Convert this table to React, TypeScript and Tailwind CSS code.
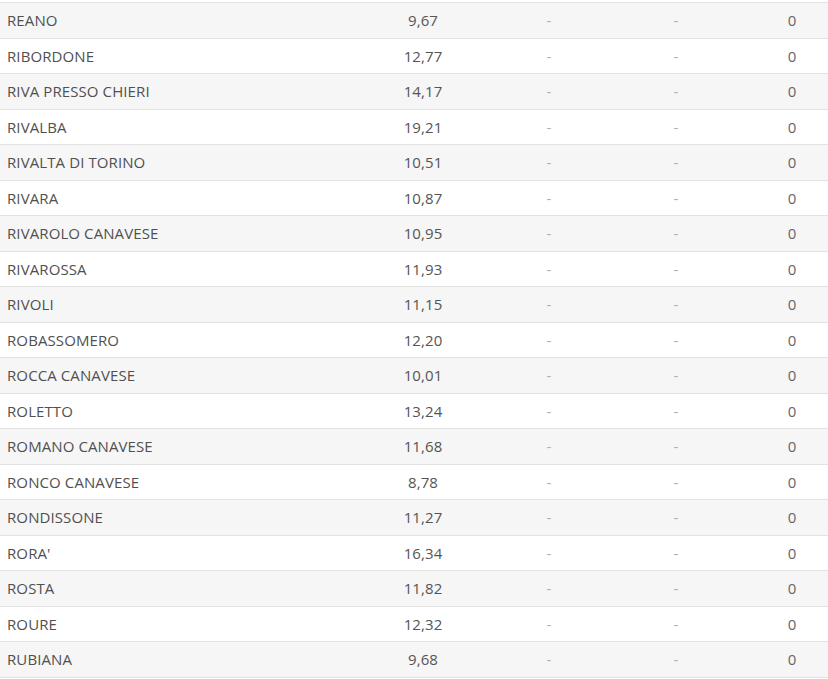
import React from "react";

const rows: [string, string][] = [
  ["REANO", "9,67"],
  ["RIBORDONE", "12,77"],
  ["RIVA PRESSO CHIERI", "14,17"],
  ["RIVALBA", "19,21"],
  ["RIVALTA DI TORINO", "10,51"],
  ["RIVARA", "10,87"],
  ["RIVAROLO CANAVESE", "10,95"],
  ["RIVAROSSA", "11,93"],
  ["RIVOLI", "11,15"],
  ["ROBASSOMERO", "12,20"],
  ["ROCCA CANAVESE", "10,01"],
  ["ROLETTO", "13,24"],
  ["ROMANO CANAVESE", "11,68"],
  ["RONCO CANAVESE", "8,78"],
  ["RONDISSONE", "11,27"],
  ["RORA'", "16,34"],
  ["ROSTA", "11,82"],
  ["ROURE", "12,32"],
  ["RUBIANA", "9,68"],
];

export default function App() {
  return (
    <div
      className="w-[828px] h-[679px] bg-white overflow-hidden pt-[2px]"
      style={{ fontFamily: '"Open Sans", "Noto Sans", sans-serif' }}
    >
      <div className="border-t border-[#e2e2e2]">
        {rows.map(([name, val], i) => (
          <div
            key={name}
            className={`grid grid-cols-[360px_126px_126px_128px_1fr] items-center h-[35.5px] border-b border-[#e2e2e2] text-[15px] tracking-[0.1px] ${
              i % 2 === 0 ? "bg-[#f6f6f6]" : "bg-white"
            }`}
          >
            <div className="pl-[7px] text-[#505050]">{name}</div>
            <div className="text-center text-[#555555]">{val}</div>
            <div className="text-center text-[#b0b0b0]">-</div>
            <div className="text-center text-[#b0b0b0]">-</div>
            <div className="pl-4 text-center text-[#666666]">0</div>
          </div>
        ))}
      </div>
    </div>
  );
}
